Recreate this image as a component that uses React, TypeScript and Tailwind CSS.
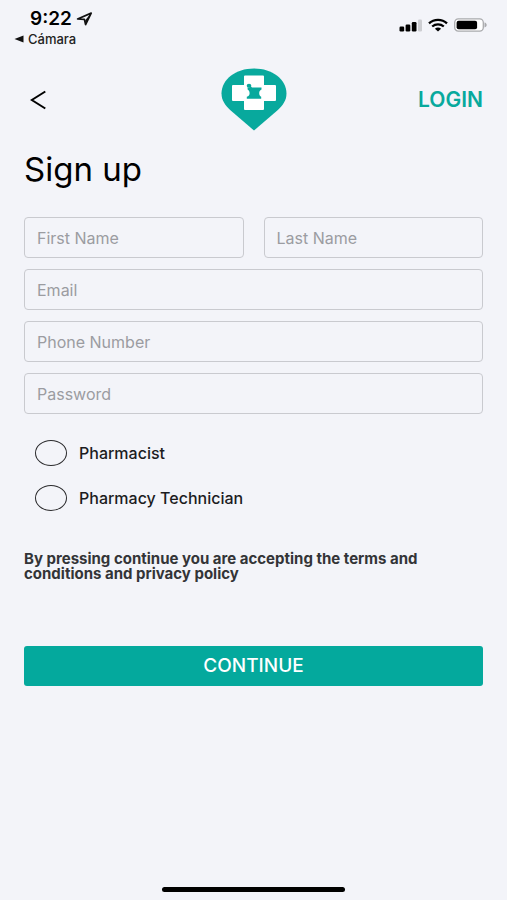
import React, { useState } from "react";

const StatusBar: React.FC = () => (
  <div className="flex items-start justify-between pt-2 pl-3 pr-5">
    <div>
      <div className="flex items-center gap-1 pl-[18px]">
        <span className="text-[19px] leading-[22px] font-semibold">9:22</span>
        <svg width="17" height="14" viewBox="0 0 17 14" aria-hidden="true">
          <path d="M1.6 7 15.2 1.1 9.6 12.6 8.4 7.4Z" fill="none" stroke="#111" strokeWidth="1.7" strokeLinejoin="round" />
          <path d="M15.2 1.1 9.6 12.6 9 8.6Z" fill="#111" />
        </svg>
      </div>
      <a href="#camara" className="flex items-center gap-1 pl-[2px] text-[13px] leading-[18px] font-medium text-[#222]">
        <svg width="10" height="8" viewBox="0 0 10 8" aria-hidden="true">
          <path d="M0.5 4 9.5 0.5V7.5Z" fill="#111" />
        </svg>
        Cámara
      </a>
    </div>
    <div className="flex items-center gap-[6px] pt-[10px]">
      <svg width="23" height="14" viewBox="0 0 23 14" aria-hidden="true">
        <rect x="0.5" y="8.5" width="4.7" height="5" rx="1.2" />
        <rect x="6.6" y="6.5" width="4.7" height="7" rx="1.2" />
        <rect x="12.8" y="4" width="4.7" height="9.5" rx="1.2" />
        <rect x="19" y="1.5" width="4" height="12" rx="1.2" fill="#cdced2" />
      </svg>
      <svg width="20" height="14" viewBox="0 0 20 14" aria-hidden="true">
        <g fill="none" stroke="#000" strokeWidth="2.3">
          <path d="M1 5.3C6 0.6 14 0.6 19 5.3" />
          <path d="M4.2 8.5C7.5 5.6 12.5 5.6 15.8 8.5" />
        </g>
        <path d="M6.9 10.7C8.7 9.2 11.3 9.2 13.1 10.7L10 13.5Z" />
      </svg>
      <svg width="33" height="14" viewBox="0 0 33 14" aria-hidden="true">
        <rect x="0.7" y="0.9" width="28.6" height="12.2" rx="3.6" fill="#fff" stroke="#a9aaad" strokeWidth="1.3" />
        <rect x="2.6" y="2.8" width="20.5" height="8.4" rx="2" />
        <path d="M30.5 4.6C33.4 5.2 33.4 8.8 30.5 9.4Z" fill="#a9aaad" />
      </svg>
    </div>
  </div>
);

const Logo: React.FC = () => (
  <svg width="66" height="63" viewBox="0 0 66 63" role="img" aria-label="Pharmacy logo">
    <path d="M33 0.5C14.5 0.5 0.5 11.5 0.5 25.5C0.5 32 4 37.5 10 42.8L33 62.5L56 42.8C62 37.5 65.5 32 65.5 25.5C65.5 11.5 51.5 0.5 33 0.5Z" fill="#08a99d" />
    <path d="M24 7.5H42Q43 7.5 43 8.5V17H54Q55 17 55 18V32Q55 33 54 33H43V41Q43 42 42 42H24Q23 42 23 41V33H12Q11 33 11 32V18Q11 17 12 17H23V8.5Q23 7.5 24 7.5Z" fill="#fff" />
    <ellipse cx="28" cy="17.8" rx="2.3" ry="2" fill="#08a99d" />
    <path d="M28.6 17 31 19.5H40.5V21.6C38.8 22.4 38.2 23.6 38.2 25.2C38.2 27 39 28 40.2 28.8V30.8H25.8V28.8C27.8 28 28.6 27 28.6 25.2C28.6 23.6 28 22.4 26.6 21.6V19.5H28.6Z" fill="#08a99d" />
  </svg>
);

interface FieldProps {
  name: string;
  label: string;
  type?: string;
}

const Field: React.FC<FieldProps> = ({ name, label, type = "text" }) => (
  <input
    type={type}
    name={name}
    aria-label={label}
    placeholder={label}
    className="h-[41px] w-full min-w-0 rounded border border-[#c9cacf] bg-transparent px-3 text-base text-[#222] outline-none placeholder:text-[#9b9ca1] focus:border-[#08a99d]"
  />
);

const roles = [
  { id: "pharmacist", label: "Pharmacist" },
  { id: "technician", label: "Pharmacy Technician" },
];

export default function App() {
  const [role, setRole] = useState<string>("");

  return (
    <div className="flex min-h-screen flex-col bg-[#f3f4f9] font-['Inter','Liberation_Sans',sans-serif] text-black">
      <StatusBar />

      <header className="grid grid-cols-3 items-center px-6 pt-5">
        <button type="button" aria-label="Back" className="justify-self-start px-[6px] py-2">
          <svg width="17" height="20" viewBox="0 0 17 20" aria-hidden="true">
            <path d="M15.3 1.5 1.8 10 15.3 18.5" fill="none" stroke="#000" strokeWidth="2" />
          </svg>
        </button>
        <div className="justify-self-center">
          <Logo />
        </div>
        <a href="#login" className="justify-self-end text-[21px] font-semibold text-[#08a99d]">
          LOGIN
        </a>
      </header>

      <main className="px-6">
        <h1 className="pt-[18px] text-[33px] leading-10">Sign up</h1>

        <form className="pt-7" onSubmit={(e) => e.preventDefault()}>
          <div className="flex flex-col gap-[11px]">
            <div className="grid grid-cols-2 gap-5">
              <Field name="firstName" label="First Name" />
              <Field name="lastName" label="Last Name" />
            </div>
            <Field name="email" label="Email" type="email" />
            <Field name="phone" label="Phone Number" type="tel" />
            <Field name="password" label="Password" type="password" />
          </div>

          <div className="flex flex-col gap-[19px] pt-[26px] pl-[11px]">
            {roles.map(({ id, label }) => (
              <label key={id} className="flex items-center gap-3 text-base leading-[26px] font-medium text-[#1c1c1e]">
                <input
                  type="radio"
                  name="role"
                  value={id}
                  checked={role === id}
                  onChange={() => setRole(id)}
                  className="h-[26px] w-8 appearance-none rounded-[50%] border border-[#2b2b2d] checked:bg-[#08a99d]"
                />
                {label}
              </label>
            ))}
          </div>

          <p className="pt-10 pr-10 text-[15px] leading-[15px] font-bold text-[#333437]">
            By pressing continue you are accepting the terms and conditions and privacy policy
          </p>

          <button type="submit" className="mt-[65px] h-10 w-full rounded-[3px] bg-[#04a99d] text-[19px] font-medium text-white">
            CONTINUE
          </button>
        </form>
      </main>

      <div className="mt-auto flex justify-center pb-2">
        <div className="h-[5px] w-[36%] rounded-full bg-black" />
      </div>
    </div>
  );
}
